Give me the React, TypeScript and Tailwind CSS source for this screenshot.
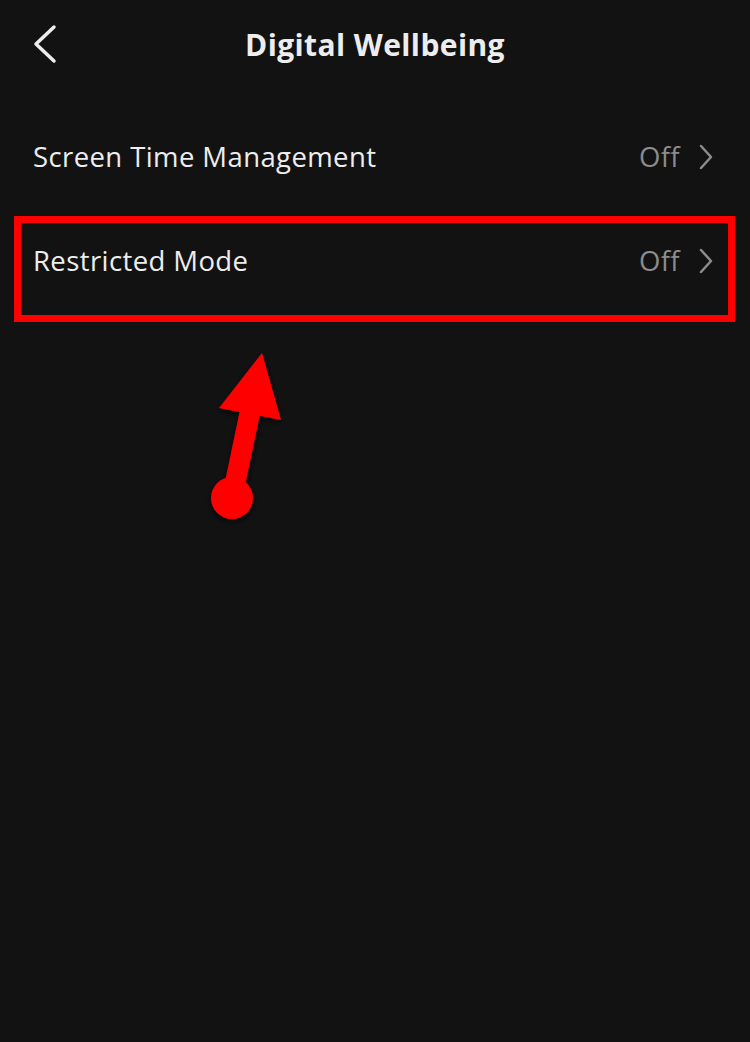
const rows = [
  { label: "Screen Time Management", value: "Off" },
  { label: "Restricted Mode", value: "Off" },
];

function Chevron({ dir, className }: { dir: "left" | "right"; className?: string }) {
  return dir === "left" ? (
    <svg width="26" height="40" viewBox="0 0 26 40" className={className}>
      <polyline points="21,3 3,20 21,37" fill="none" stroke="currentColor" strokeWidth="3.5" strokeLinecap="round" strokeLinejoin="round" />
    </svg>
  ) : (
    <svg width="16" height="26" viewBox="0 0 16 26" className={className}>
      <polyline points="3,2 13,13 3,24" fill="none" stroke="currentColor" strokeWidth="2.5" strokeLinecap="round" strokeLinejoin="round" />
    </svg>
  );
}

export default function App() {
  return (
    <div
      className="relative w-[750px] h-[1042px] bg-[#121212] text-[#ededed] overflow-hidden"
      style={{ fontFamily: "'Open Sans', Lato, sans-serif" }}
    >
      <header className="relative h-[88px] flex items-center justify-center">
        <button className="absolute left-[33px] top-[24px] text-[#ededed]">
          <Chevron dir="left" />
        </button>
        <h1 className="text-[30px] font-bold tracking-[0.4px]">Digital Wellbeing</h1>
      </header>

      <div className="mt-[17px]">
        {rows.map((row) => (
          <div key={row.label} className="h-[104px] flex items-center pl-[33px] pr-[36px]">
            <span className="text-[27.5px] tracking-[0.4px] flex-1">{row.label}</span>
            <span className="text-[27.5px] tracking-[0.4px] text-[#8c8c8c] mr-[18px]">{row.value}</span>
            <Chevron dir="right" className="text-[#8c8c8c]" />
          </div>
        ))}
      </div>

      {/* annotation box */}
      <div className="absolute left-[14px] top-[216px] w-[721px] h-[106px] border-[7px] border-[#ff0000]" />

      {/* annotation arrow */}
      <svg className="absolute left-0 top-0" width="750" height="1042" viewBox="0 0 750 1042">
        <defs>
          <filter id="sh" x="-50%" y="-50%" width="200%" height="200%">
            <feDropShadow dx="0" dy="3" stdDeviation="3" floodColor="#000" floodOpacity="0.6" />
          </filter>
        </defs>
        <g filter="url(#sh)" fill="#ff0000">
          <polygon points="262,353 219,408 281,420" />
          <polygon points="240,410 260,414 242,500 222,496" />
          <circle cx="232" cy="498" r="21" />
        </g>
      </svg>
    </div>
  );
}
